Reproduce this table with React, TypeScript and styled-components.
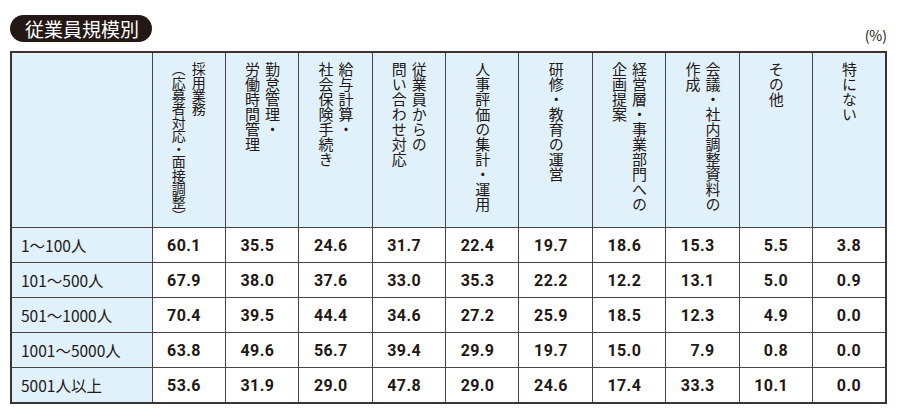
import React from 'react';
import styled, { createGlobalStyle } from 'styled-components';

const GlobalStyle = createGlobalStyle`
  html, body {
    margin: 0;
    padding: 0;
    background: #fff;
  }
  body {
    font-family: "Noto Sans CJK JP", "Noto Sans", sans-serif;
    color: #231815;
  }
`;

const Page = styled.div`
  width: 900px;
  height: 417px;
  box-sizing: border-box;
  padding: 15px 13px 0 10px;
`;

const TopBar = styled.div`
  display: flex;
  justify-content: space-between;
  height: 36px;
`;

const Pill = styled.div`
  align-self: flex-start;
  height: 27px;
  padding: 0 13px 0 15px;
  background: #231815;
  color: #fff;
  border-radius: 14px;
  font-size: 19px;
  line-height: 27px;
`;

const Unit = styled.div`
  align-self: flex-end;
  margin-bottom: 8px;
  font-size: 14px;
  line-height: 16px;
  color: #231815;
`;

const Table = styled.table`
  width: 877px;
  border-collapse: collapse;
  table-layout: fixed;
  border: 2px solid #3a3433;
`;

const HeadCell = styled.th`
  height: 174px;
  padding: 0;
  background: #e1f1fb;
  border: 1px solid #4a4443;
  vertical-align: top;
  font-weight: 400;
`;

const HeadInner = styled.div`
  display: flex;
  justify-content: center;
  align-items: flex-start;
  height: 165px;
  padding-top: 9px;
  overflow: hidden;
`;

const Vertical = styled.div<{ $tight?: boolean }>`
  writing-mode: vertical-rl;
  text-align: start;
  font-size: ${(p) => (p.$tight ? '14px' : '15px')};
  letter-spacing: ${(p) => (p.$tight ? '-0.7px' : '0')};
  line-height: 20px;
  color: #231815;
`;

const LabelCell = styled.td`
  height: 34px;
  padding: 0 0 0 9px;
  background: #e1f1fb;
  border: 1px solid #4a4443;
  font-size: 15.5px;
  color: #231815;
  white-space: nowrap;
`;

const ValueCell = styled.td`
  padding: 0 24px 0 0;
  background: #fff;
  border: 1px solid #4a4443;
  text-align: right;
  font-family: "Roboto", "Liberation Sans", sans-serif;
  font-weight: 700;
  font-size: 16px;
  letter-spacing: 0.4px;
  color: #231815;
`;

const columns: { lines: string[]; tight?: boolean }[] = [
  { lines: ['採用業務', '（応募者対応・面接調整）'], tight: true },
  { lines: ['勤怠管理・', '労働時間管理'] },
  { lines: ['給与計算・', '社会保険手続き'] },
  { lines: ['従業員からの', '問い合わせ対応'] },
  { lines: ['人事評価の集計・運用'] },
  { lines: ['研修・教育の運営'] },
  { lines: ['経営層・事業部門への', '企画提案'] },
  { lines: ['会議・社内調整資料の', '作成'] },
  { lines: ['その他'] },
  { lines: ['特にない'] },
];

const rows: { label: string; values: string[] }[] = [
  { label: '1〜100人', values: ['60.1', '35.5', '24.6', '31.7', '22.4', '19.7', '18.6', '15.3', '5.5', '3.8'] },
  { label: '101〜500人', values: ['67.9', '38.0', '37.6', '33.0', '35.3', '22.2', '12.2', '13.1', '5.0', '0.9'] },
  { label: '501〜1000人', values: ['70.4', '39.5', '44.4', '34.6', '27.2', '25.9', '18.5', '12.3', '4.9', '0.0'] },
  { label: '1001〜5000人', values: ['63.8', '49.6', '56.7', '39.4', '29.9', '19.7', '15.0', '7.9', '0.8', '0.0'] },
  { label: '5001人以上', values: ['53.6', '31.9', '29.0', '47.8', '29.0', '24.6', '17.4', '33.3', '10.1', '0.0'] },
];

const App: React.FC = () => {
  return (
    <Page>
      <GlobalStyle />
      <TopBar>
        <Pill>従業員規模別</Pill>
        <Unit>(%)</Unit>
      </TopBar>
      <Table>
        <colgroup>
          <col style={{ width: 141 }} />
          {columns.map((_, i) => (
            <col key={i} />
          ))}
        </colgroup>
        <thead>
          <tr>
            <HeadCell />
            {columns.map((c, i) => (
              <HeadCell key={i}>
                <HeadInner>
                  <Vertical $tight={c.tight}>
                    {c.lines.map((l, j) => (
                      <React.Fragment key={j}>
                        {j > 0 && <br />}
                        {l}
                      </React.Fragment>
                    ))}
                  </Vertical>
                </HeadInner>
              </HeadCell>
            ))}
          </tr>
        </thead>
        <tbody>
          {rows.map((r) => (
            <tr key={r.label}>
              <LabelCell>{r.label}</LabelCell>
              {r.values.map((v, i) => (
                <ValueCell key={i}>{v}</ValueCell>
              ))}
            </tr>
          ))}
        </tbody>
      </Table>
    </Page>
  );
};

export default App;
